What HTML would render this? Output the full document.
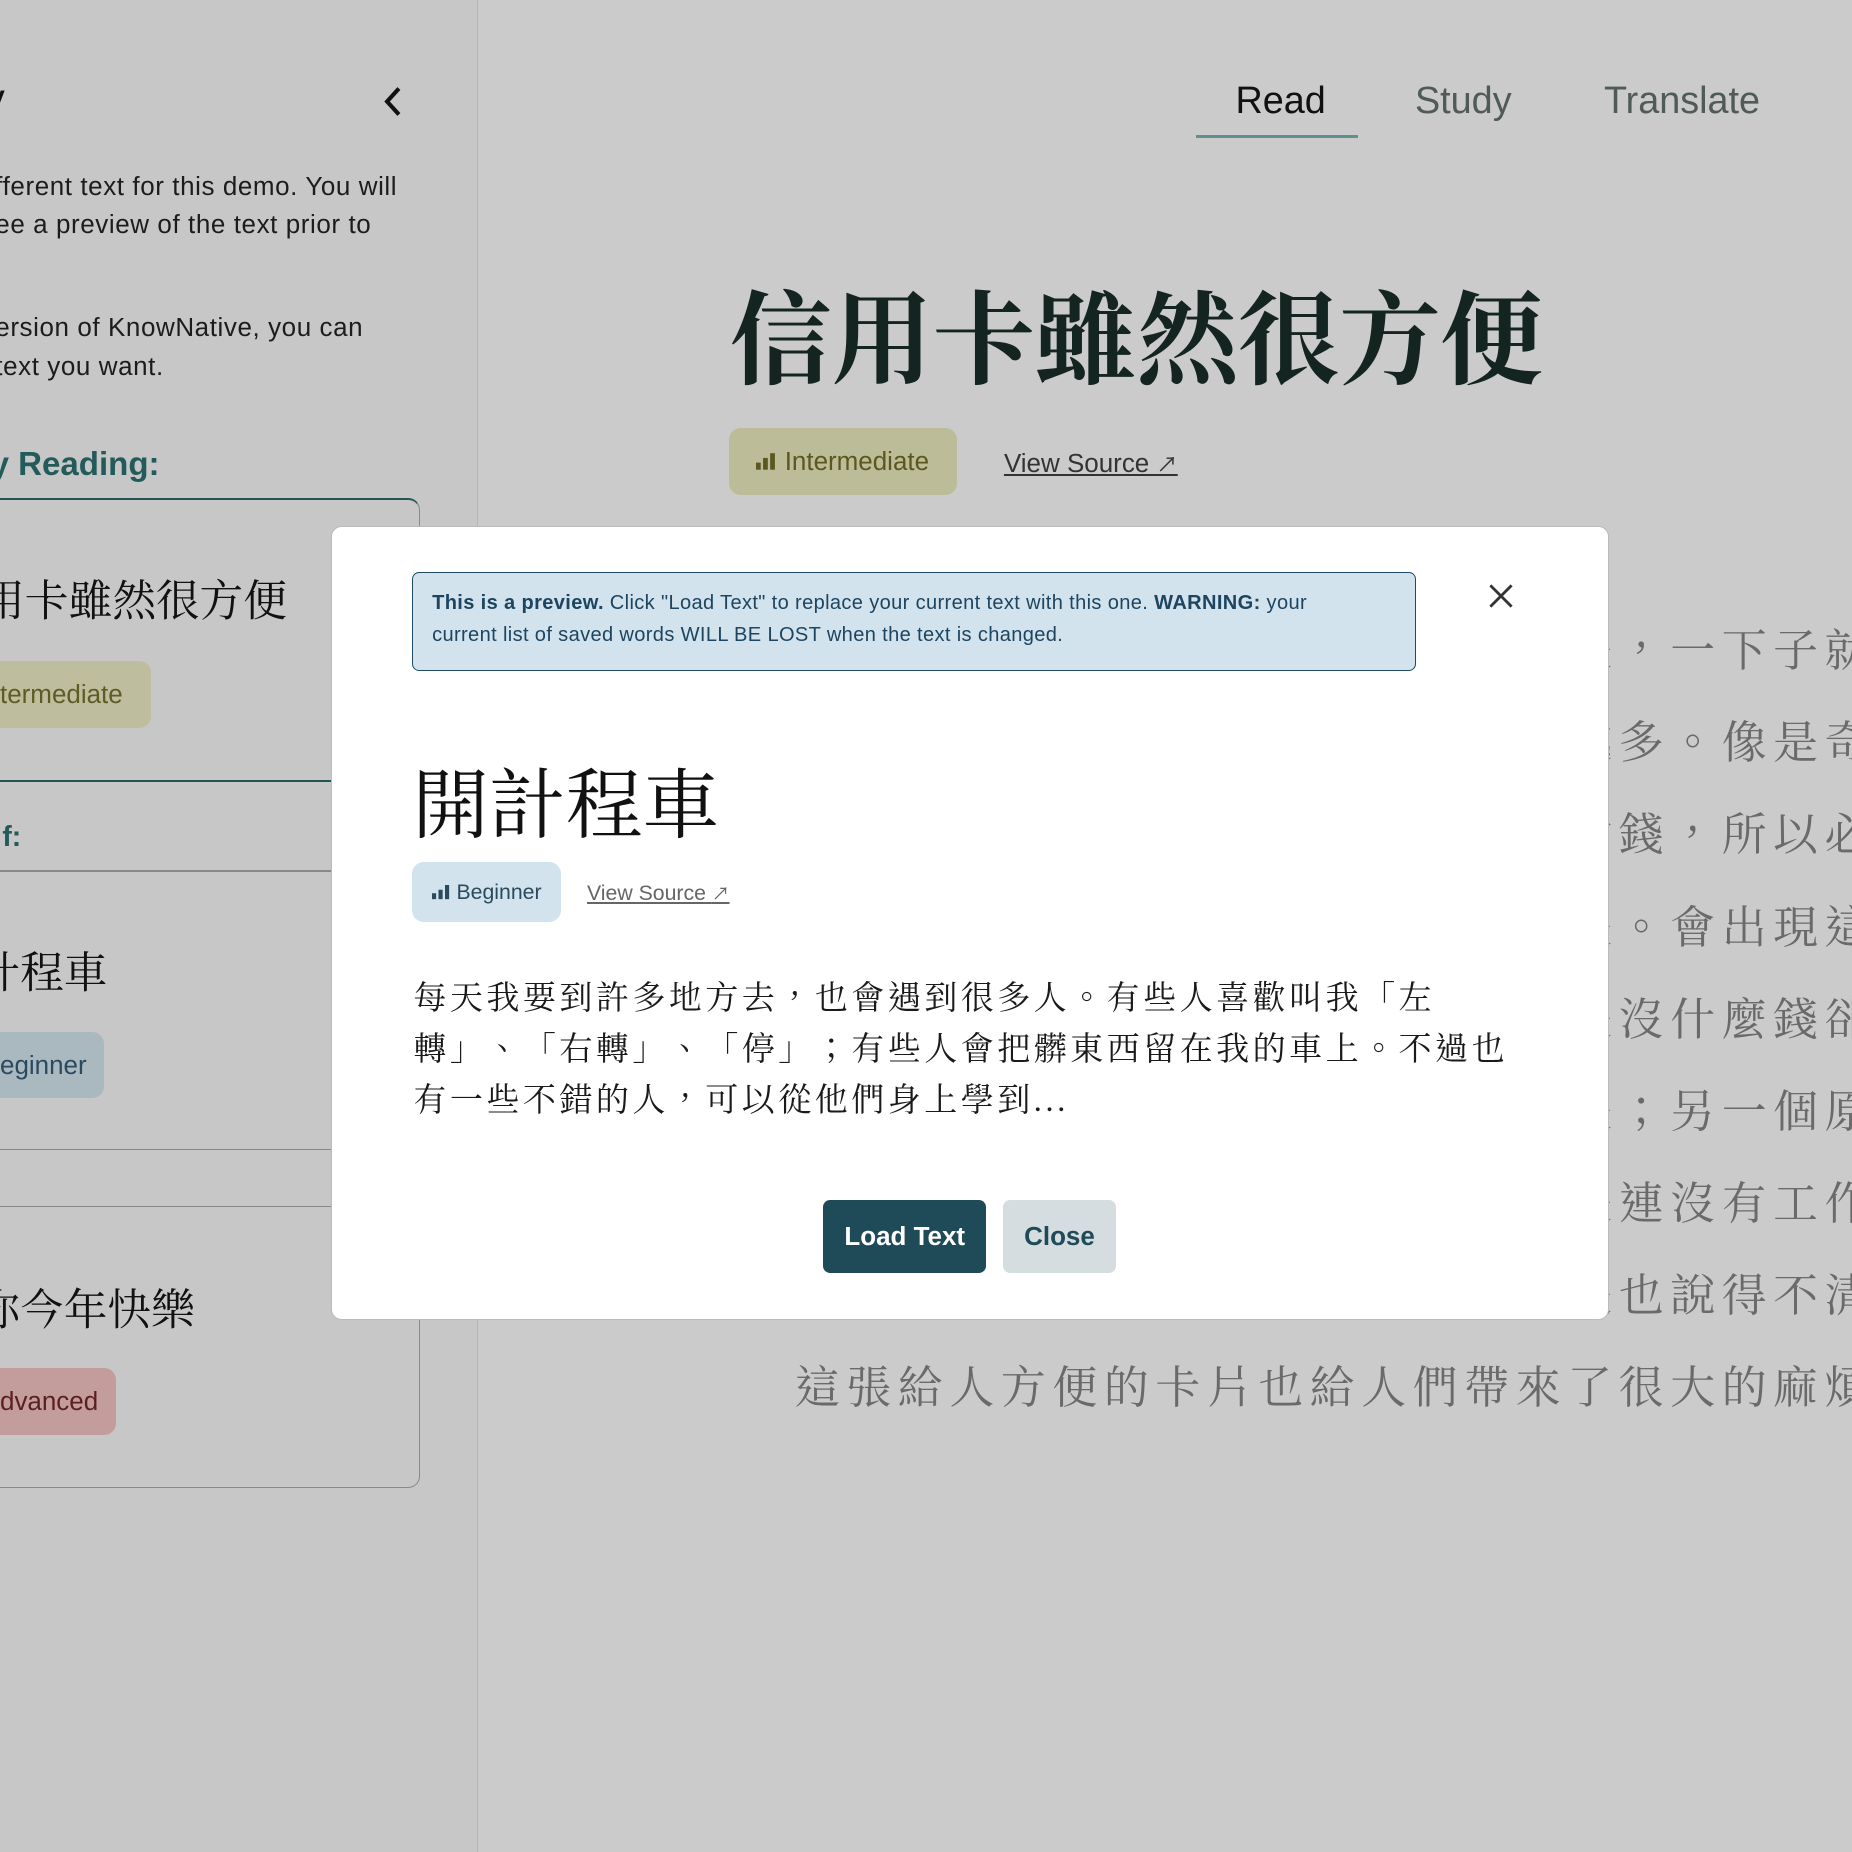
<!DOCTYPE html>
<html><head><meta charset="utf-8"><style>
html,body{margin:0;padding:0;width:1852px;height:1852px;overflow:hidden;background:#cbcbcb}
#w{position:absolute;left:0;top:0;width:1568px;height:1568px;overflow:hidden;zoom:1.18112;font-family:"Liberation Sans","Noto Sans CJK TC",sans-serif;text-spacing-trim:space-all}
.a{position:absolute;white-space:nowrap}
.side{position:absolute;left:0;top:0;width:404px;height:1568px;overflow:hidden;background:#c6c7c6;border-right:1px solid #a8bcbb;box-sizing:border-box;width:405px}
.p{font-size:22px;color:#1c1c1c;letter-spacing:0.5px}
.serif{font-family:"Liberation Serif","Noto Serif CJK TC","Noto Serif CJK SC",serif}
.badge{position:absolute;border-radius:10px;font-size:22px;display:flex;align-items:center}
.body{font-size:38px;color:#6a6a6a;letter-spacing:5.6px}
.clip{position:absolute;left:673px;top:500px;width:895px;height:720px;overflow:hidden}
.clip div{position:absolute;left:0;white-space:nowrap}
</style></head><body><div id="w">
<div class="side">
 <div class="a" style="left:-14px;top:64px;font-size:36px;color:#111">y</div>
 <svg class="a" style="left:322px;top:72px" width="22" height="28" viewBox="0 0 22 28"><path d="M16 3 L6 14 L16 25" fill="none" stroke="#111" stroke-width="3.5"/></svg>
 <div class="a p" style="left:-4px;top:145px">fferent text for this demo. You will</div>
 <div class="a p" style="left:-4px;top:177px">ee a preview of the text prior to</div>
 <div class="a p" style="left:-4px;top:264px">ersion of KnowNative, you can</div>
 <div class="a p" style="left:-4px;top:297px">text you want.</div>
 <div class="a" style="left:-8px;top:378px;font-size:28px;color:#235b5b;font-weight:bold">y Reading:</div>
 <div class="a" style="left:-20px;top:422px;width:374px;height:835px;border:1px solid #8a8a8a;border-top:2px solid #245456;border-radius:10px"></div>
 <div class="a serif" style="left:-16px;top:480px;font-size:37px;color:#111">用卡雖然很方便</div>
 <div class="badge" style="left:-20px;top:560px;width:148px;height:56px;background:#bebd9e;color:#5e5c25;padding-left:20px;box-sizing:border-box">termediate</div>
 <div class="a" style="left:0;top:660px;width:404px;height:2px;background:#245456"></div>
 <div class="a" style="left:2px;top:695px;font-size:24px;color:#235b5b;font-weight:bold">f:</div>
 <div class="a" style="left:0;top:737px;width:404px;height:1px;background:#888"></div>
 <div class="a serif" style="left:-20px;top:795px;font-size:37px;color:#111">计程車</div>
 <div class="badge" style="left:-20px;top:874px;width:108px;height:56px;background:#aab8c0;color:#2c4a5e;padding-left:20px;box-sizing:border-box">eginner</div>
 <div class="a" style="left:0;top:973px;width:404px;height:1px;background:#888"></div>
 <div class="a" style="left:0;top:1021px;width:404px;height:1px;background:#888"></div>
 <div class="a serif" style="left:-20px;top:1080px;font-size:37px;color:#111">你今年快樂</div>
 <div class="badge" style="left:-20px;top:1158px;width:118px;height:57px;background:#c29d9c;color:#5b1f1f;padding-left:20px;box-sizing:border-box">dvanced</div>
</div>
<div class="a" style="left:1046px;top:68px;font-size:32px;color:#111">Read</div>
<div class="a" style="left:1013px;top:114px;width:137px;height:3px;background:#5f9188"></div>
<div class="a" style="left:1198px;top:68px;font-size:32px;color:#505a58">Study</div>
<div class="a" style="left:1358px;top:68px;font-size:32px;color:#505a58">Translate</div>
<div class="a serif" style="left:618px;top:220px;font-size:86px;font-weight:bold;color:#142420">信用卡雖然很方便</div>
<div class="badge" style="left:617px;top:362px;width:193px;height:57px;background:#bdbc98;color:#5a581e;justify-content:center">
 <svg width="18" height="16" style="margin-right:6px"><rect x="0" y="9" width="4" height="6" fill="#5a581e"/><rect x="6" y="5" width="4" height="10" fill="#5a581e"/><rect x="12" y="1" width="4" height="14" fill="#5a581e"/></svg>Intermediate</div>
<div class="a" style="left:850px;top:379px;font-size:22px;color:#333;text-decoration:underline">View Source <span style="font-size:18px">↗</span></div>
<div class="clip serif body">
<div style="top:20px">樣的問題有很多原因其中一個原因是，一下子就變多了</div>
<div style="top:98px">樣的問題有很多原因其中一個原因越多。像是奇怪的</div>
<div style="top:176px">樣的問題有很多原因其中一個原因付錢，所以必須要</div>
<div style="top:254px">樣的問題有很多原因其中一個原因是。會出現這樣的</div>
<div style="top:332px">樣的問題有很多原因其中一個原因是沒什麼錢卻想要</div>
<div style="top:410px">樣的問題有很多原因其中一個原因是；另一個原因是</div>
<div style="top:488px">樣的問題有很多原因其中一個原因是連沒有工作的人</div>
<div style="top:566px">樣的問題有很多原因其中一個原因是也說得不清楚了</div>
<div style="top:644px">這張給人方便的卡片也給人們帶來了很大的麻煩</div>
</div>

<div class="a" style="left:280px;top:445px;width:1082px;height:673px;background:#fff;border-radius:9px;border:1px solid #bbb;box-sizing:border-box"></div>
<div class="a" style="left:349px;top:484px;width:850px;height:84px;background:#d2e3ee;border:1px solid #1e4a63;border-radius:6px;box-sizing:border-box;font-size:17px;letter-spacing:0.3px;color:#1d4560;line-height:27px;padding:13px 16px"><b>This is a preview.</b> Click "Load Text" to replace your current text with this one. <b>WARNING:</b> your<br>current list of saved words WILL BE LOST when the text is changed.</div>
<svg class="a" style="left:1260px;top:494px" width="22" height="22"><path d="M2 2 L20 20 M20 2 L2 20" stroke="#333" stroke-width="2.4"/></svg>
<div class="a serif" style="left:349px;top:630px;font-size:65px;color:#111">開計程車</div>
<div class="badge" style="left:349px;top:730px;width:126px;height:51px;background:#d2e3ee;color:#2a4a5e;font-size:18px;justify-content:center">
 <svg width="16" height="13" style="margin-right:5px"><rect x="0" y="7" width="3.5" height="5" fill="#2a4a5e"/><rect x="5.5" y="4" width="3.5" height="8" fill="#2a4a5e"/><rect x="11" y="0" width="3.5" height="12" fill="#2a4a5e"/></svg>Beginner</div>
<div class="a" style="left:497px;top:745px;font-size:18px;color:#666;text-decoration:underline">View Source <span style="font-size:15px">↗</span></div>
<div class="a serif" style="left:350px;top:825px;font-size:28px;line-height:43px;letter-spacing:2.9px;color:#1a1a1a">每天我要到許多地方去，也會遇到很多人。有些人喜歡叫我「左<br>轉」、「右轉」、「停」；有些人會把髒東西留在我的車上。不過也<br>有一些不錯的人，可以從他們身上學到...</div>
<div class="a" style="left:697px;top:1016px;width:138px;height:62px;background:#1f4a57;border-radius:6px;color:#fff;font-weight:bold;font-size:22px;display:flex;align-items:center;justify-content:center">Load Text</div>
<div class="a" style="left:849px;top:1016px;width:96px;height:62px;background:#d5dde0;border-radius:6px;color:#1f4a57;font-weight:bold;font-size:22px;display:flex;align-items:center;justify-content:center">Close</div>
</div></body></html>
